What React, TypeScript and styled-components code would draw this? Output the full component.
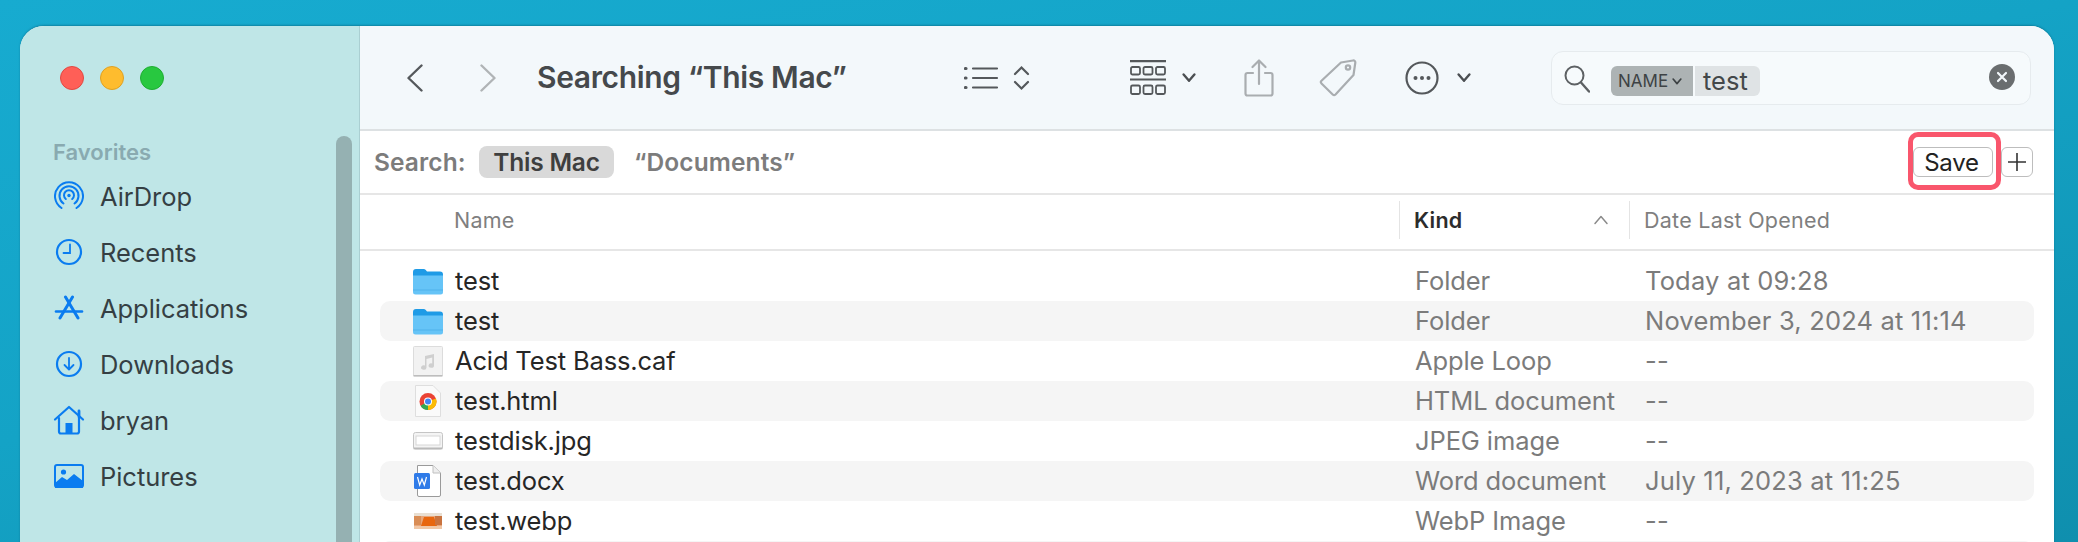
import React from "react";
import styled, { createGlobalStyle } from "styled-components";

const Global = createGlobalStyle`
  html, body { margin: 0; padding: 0; height: 542px; overflow: hidden; }
  body { font-family: Inter, "Noto Sans", "Liberation Sans", sans-serif; -webkit-font-smoothing: antialiased; }
  #root { height: 542px; }
`;

const Desktop = styled.div`
  box-sizing: border-box;
  height: 542px;
  padding: 26px 24px 0 20px;
  background: linear-gradient(168deg, #17abd0 0%, #14a3c6 45%, #0f8fae 100%);
  overflow: hidden;
`;
const Win = styled.div`
  display: flex;
  height: 560px;
  border-radius: 24px 24px 0 0;
  overflow: hidden;
  background: #fff;
  box-shadow: 0 -1px 2px rgba(0, 60, 80, 0.35);
`;
const Sidebar = styled.aside`
  position: relative;
  box-sizing: border-box;
  width: 340px;
  flex: none;
  padding: 40px 0 0 33px;
  background: #bfe6e7;
  border-right: 1px solid #aacfd2;
`;
const Lights = styled.div`
  display: flex;
  gap: 16px;
  padding-left: 7px;
  height: 24px;
`;
const Light = styled.span<{ $c: string; $b: string }>`
  box-sizing: border-box;
  width: 24px;
  height: 24px;
  border-radius: 50%;
  background: ${(p) => p.$c};
  border: 1px solid ${(p) => p.$b};
`;
const SectionTitle = styled.div`
  margin-top: 47px;
  height: 30px;
  line-height: 30px;
  font-size: 22px;
  font-weight: 600;
  color: #89aab0;
`;
const NavList = styled.nav`
  display: flex;
  flex-direction: column;
  margin-top: 1px;
`;
const NavItem = styled.div`
  display: flex;
  align-items: center;
  height: 56px;
  font-size: 25.5px;
  letter-spacing: -0.05px;
  color: #353f43;
`;
const NavIcon = styled.span`
  display: flex;
  justify-content: center;
  align-items: center;
  width: 32px;
  margin-right: 15px;
  flex: none;
`;
const Scrollbar = styled.div`
  position: absolute;
  left: 316px;
  top: 110px;
  bottom: 0;
  width: 16px;
  border-radius: 8px 8px 0 0;
  background: #95b1b2;
`;
const Main = styled.main`
  flex: 1;
  min-width: 0;
  display: flex;
  flex-direction: column;
`;
const Toolbar = styled.header`
  box-sizing: border-box;
  display: flex;
  align-items: center;
  height: 105px;
  padding-left: 47px;
  background: #f3f8fb;
  border-bottom: 2px solid #dde1e3;
`;
const ToolSlot = styled.div<{ $w: number }>`
  display: flex;
  align-items: center;
  flex: none;
  width: ${(p) => p.$w}px;
`;
const ToolGap = styled.span<{ $w: number }>`
  flex: none;
  width: ${(p) => p.$w}px;
`;
const Title = styled.h1`
  flex: none;
  width: 427px;
  margin: 0 0 2px;
  font-size: 30px;
  font-weight: 600;
  letter-spacing: -0.35px;
  color: #45494c;
  white-space: nowrap;
`;
const SearchField = styled.div`
  box-sizing: border-box;
  flex: none;
  display: flex;
  align-items: center;
  width: 480px;
  height: 54px;
  margin-top: 1px;
  padding-left: 12px;
  border: 1px solid #e6ebee;
  border-radius: 12px;
  background: #f6fafc;
`;
const SearchGlyph = styled.span`
  display: flex;
  margin-top: 2px;
`;
const TokenName = styled.span`
  display: flex;
  align-items: center;
  gap: 4px;
  box-sizing: border-box;
  width: 82px;
  height: 30px;
  margin: 6px 0 0 21px;
  padding-left: 7px;
  border-radius: 6px 0 0 6px;
  background: #adb3b4;
  color: #3d4244;
  font-size: 17px;
`;
const TokenValue = styled.span`
  box-sizing: border-box;
  width: 65px;
  height: 30px;
  margin: 6px 0 0 2px;
  padding-left: 8px;
  line-height: 30px;
  border-radius: 0 6px 6px 0;
  background: #dfe3e5;
  color: #43484a;
  font-size: 25.5px;
`;
const ClearBtn = styled.span`
  display: flex;
  margin: 0 15px 2px auto;
`;
const ScopeBar = styled.div`
  position: relative;
  box-sizing: border-box;
  display: flex;
  align-items: center;
  height: 64px;
  padding-left: 14px;
  border-bottom: 2px solid #e6e6e6;
  font-size: 24.5px;
  font-weight: 600;
  color: #7c7c7c;
`;
const ScopeLabel = styled.span`
  width: 105px;
  letter-spacing: 0.1px;
`;
const ScopePill = styled.span<{ $active?: boolean }>`
  box-sizing: border-box;
  height: 32px;
  line-height: 32px;
  width: ${(p) => (p.$active ? "135px" : "auto")};
  margin-left: ${(p) => (p.$active ? "0" : "20px")};
  text-align: center;
  border-radius: 8px;
  letter-spacing: ${(p) => (p.$active ? "-0.2px" : "0.1px")};
  background: ${(p) => (p.$active ? "#d9d9d9" : "transparent")};
  color: ${(p) => (p.$active ? "#3f3f3f" : "#7c7c7c")};
`;
const ScopeActions = styled.div`
  display: flex;
  margin-left: auto;
  margin-right: 21px;
`;
const SaveButton = styled.button`
  position: relative;
  box-sizing: border-box;
  width: 80px;
  height: 30px;
  padding: 0 3px 0 0;
  border: 1px solid #bdbdbd;
  border-radius: 6px;
  background: #fff;
  color: #222;
  font: 400 24px Inter, sans-serif;
  letter-spacing: -0.2px;
  &::after {
    content: "";
    position: absolute;
    left: -6px;
    right: -9px;
    top: -16px;
    bottom: -14px;
    border: 5px solid #f9566c;
    border-radius: 10px;
  }
`;
const PlusButton = styled.span`
  box-sizing: border-box;
  display: flex;
  align-items: center;
  justify-content: center;
  width: 32px;
  height: 30px;
  margin-left: 8px;
  border: 1px solid #bdbdbd;
  border-radius: 6px;
`;
const ColumnHeader = styled.div`
  box-sizing: border-box;
  display: grid;
  grid-template-columns: 1039px 230px 1fr;
  align-items: center;
  height: 56px;
  padding-bottom: 4px;
  border-bottom: 2px solid #e6e6e6;
  font-size: 21.5px;
  color: #7f7f7f;
`;
const HeadCell = styled.div<{ $pad: number; $sep?: boolean; $strong?: boolean }>`
  box-sizing: border-box;
  display: flex;
  align-items: center;
  justify-content: space-between;
  height: 38px;
  padding-left: ${(p) => p.$pad}px;
  padding-right: 20px;
  border-left: ${(p) => (p.$sep ? "1px solid #e4e4e4" : "none")};
  font-weight: ${(p) => (p.$strong ? 600 : 400)};
  color: ${(p) => (p.$strong ? "#2c2c2c" : "#7f7f7f")};
  letter-spacing: 0.25px;
`;
const FileList = styled.div`
  display: flex;
  flex-direction: column;
  padding: 10px 20px 0;
`;
const Row = styled.div<{ $striped: boolean }>`
  display: grid;
  grid-template-columns: 1035px 230px 1fr;
  align-items: center;
  flex: none;
  height: 40px;
  border-radius: 10px;
  background: ${(p) => (p.$striped ? "#f5f5f5" : "transparent")};
  font-size: 25.5px;
  line-height: 38px;
`;
const NameCell = styled.div`
  display: flex;
  align-items: center;
  margin-left: -1px;
  letter-spacing: -0.15px;
  color: #262626;
`;
const FileIcon = styled.span`
  display: flex;
  justify-content: center;
  align-items: center;
  width: 30px;
  margin-left: 34px;
  margin-right: 12px;
  flex: none;
`;
const MutedCell = styled.div<{ $wide?: boolean }>`
  min-height: 38px;
  letter-spacing: ${(p) => (p.$wide ? "0.18px" : "-0.1px")};
  color: #7b7b7b;
  white-space: nowrap;
`;

const BLUE = "#0a7cf0";
const Glyph = styled.svg`
  display: block;
  flex: none;
`;

const IconAirDrop = () => (
  <Glyph width="30" height="30" viewBox="0 0 30 30" fill="none" stroke={BLUE} strokeWidth="2" strokeLinecap="round">
    <path d="M7.5 27A14 14 0 1 1 22.5 27" />
    <path d="M9.5 22.5A9.5 9.5 0 1 1 20.5 22.5" />
    <path d="M11.8 18A5 5 0 1 1 18.2 18" />
    <circle cx="15" cy="14.5" r="1.7" fill={BLUE} stroke="none" />
  </Glyph>
);
const IconRecents = () => (
  <Glyph width="28" height="28" viewBox="0 0 28 28" fill="none" stroke={BLUE} strokeWidth="2.2" strokeLinecap="round">
    <circle cx="14" cy="14" r="12" />
    <path d="M15 6.5V15H8.5" strokeWidth="1.8" />
  </Glyph>
);
const IconApps = () => (
  <Glyph width="30" height="26" viewBox="0 0 30 26" fill="none" stroke={BLUE} strokeWidth="3" strokeLinecap="round">
    <path d="M11.500 2L24 23" />
    <path d="M18.500 2L6 23" />
    <path d="M2 16.500H28" strokeWidth="2.600" />
  </Glyph>
);
const IconDownloads = () => (
  <Glyph width="28" height="28" viewBox="0 0 28 28" fill="none" stroke={BLUE} strokeWidth="2.2" strokeLinecap="round" strokeLinejoin="round">
    <circle cx="14" cy="14" r="12" />
    <path d="M14 8V19M9.5 15L14 19.5 18.5 15" strokeWidth="1.8" />
  </Glyph>
);
const IconHome = () => (
  <Glyph width="32" height="30" viewBox="0 0 32 30" fill="none" stroke={BLUE} strokeWidth="2.2" strokeLinecap="round" strokeLinejoin="round">
    <path d="M2 14.5L16 2l14 12.5" />
    <path d="M26 6v6" strokeWidth="2.8" />
    <path d="M6 13v13.5a2 2 0 0 0 2 2h16a2 2 0 0 0 2-2V13" />
    <rect x="12.5" y="18" width="7" height="10" fill={BLUE} stroke="none" />
  </Glyph>
);
const IconPictures = () => (
  <Glyph width="30" height="24" viewBox="0 0 30 24" fill="none">
    <rect x="1" y="1" width="28" height="22" rx="2" stroke={BLUE} strokeWidth="2" />
    <circle cx="9.5" cy="8" r="2.6" fill={BLUE} />
    <path d="M1 19l7-6 5 3 7-6 9 7v6a2 2 0 0 1-2 2H3a2 2 0 0 1-2-2z" fill={BLUE} />
  </Glyph>
);

const Chevron = ({ dir, color, w = 16, h = 28 }: { dir: "left" | "right"; color: string; w?: number; h?: number }) => (
  <Glyph width={w} height={h} viewBox="0 0 16 28" fill="none" stroke={color} strokeWidth="2.4" strokeLinecap="round" strokeLinejoin="round">
    <path d={dir === "left" ? "M14.5 1.5L1.5 14l13 12.5" : "M1.5 1.5L14.5 14l-13 12.5"} />
  </Glyph>
);
const SmallDown = ({ color = "#4b4f52", w = 14 }: { color?: string; w?: number }) => (
  <Glyph width={w} height={w * 0.7} viewBox="0 0 14 10" fill="none" stroke={color} strokeWidth="2.4" strokeLinecap="round" strokeLinejoin="round">
    <path d="M1.5 1.5L7 8l5.500-6.500" />
  </Glyph>
);
const IconListView = () => (
  <Glyph width="66" height="26" viewBox="0 0 66 26" fill="none" stroke="#54585b" strokeWidth="2.2" strokeLinecap="round">
    <path d="M9 3.500H33M9 13H33M9 22.500H33" />
    <path d="M1.500 3.500h.5M1.500 13h.5M1.500 22.500h.5" strokeWidth="3.200" />
    <path d="M51 9L57.500 2.500 64 9M51 17L57.500 23.500 64 17" />
  </Glyph>
);
const IconGroup = () => (
  <Glyph width="36" height="36" viewBox="0 0 36 36" fill="none" stroke="#54585b" strokeWidth="1.800">
    <path d="M0 1.200H36M0 19.500H36" strokeWidth="2.200" />
    <rect x="1" y="7" width="9" height="7.500" rx="1.500" />
    <rect x="13.500" y="7" width="9" height="7.500" rx="1.500" />
    <rect x="26" y="7" width="9" height="7.500" rx="1.500" />
    <rect x="1" y="25.500" width="9" height="8.500" rx="1.500" />
    <rect x="13.500" y="25.500" width="9" height="8.500" rx="1.500" />
    <rect x="26" y="25.500" width="9" height="8.500" rx="1.500" />
  </Glyph>
);
const IconShare = () => (
  <Glyph width="30" height="38" viewBox="0 0 30 38" fill="none" stroke="#a9adb0" strokeWidth="2.200" strokeLinecap="round" strokeLinejoin="round">
    <path d="M9 14H3.500a2 2 0 0 0-2 2v18.500a2 2 0 0 0 2 2h23a2 2 0 0 0 2-2V16a2 2 0 0 0-2-2H21" />
    <path d="M15 25V2M8.500 8L15 1.500 21.500 8" />
  </Glyph>
);
const IconTag = () => (
  <Glyph width="38" height="38" viewBox="0 0 38 38" fill="none" stroke="#a9adb0" strokeWidth="2.200" strokeLinejoin="round">
    <path d="M22 3.500L34 1.500a2 2 0 0 1 2.300 2.300L34.500 16 16.500 35.500a2 2 0 0 1-2.800 0L2.500 24.500a2 2 0 0 1 0-2.800z" />
    <circle cx="29" cy="8.500" r="2.200" />
  </Glyph>
);
const IconMore = () => (
  <Glyph width="34" height="34" viewBox="0 0 34 34" fill="none" stroke="#54585b" strokeWidth="2.200">
    <circle cx="17" cy="17" r="15.500" />
    <g fill="#54585b" stroke="none">
      <circle cx="10.500" cy="17" r="2" />
      <circle cx="17" cy="17" r="2" />
      <circle cx="23.500" cy="17" r="2" />
    </g>
  </Glyph>
);
const IconSearch = () => (
  <Glyph width="26" height="28" viewBox="0 0 26 28" fill="none" stroke="#5d6164" strokeWidth="2" strokeLinecap="round">
    <circle cx="10.500" cy="10.500" r="9" />
    <path d="M17 17.500L25 26.500" strokeWidth="2.400" />
  </Glyph>
);
const IconClear = () => (
  <Glyph width="26" height="26" viewBox="0 0 26 26">
    <circle cx="13" cy="13" r="13" fill="#6a6d6f" />
    <path d="M9 9l8 8M17 9l-8 8" stroke="#f3f8fb" strokeWidth="2.200" strokeLinecap="round" />
  </Glyph>
);
const IconPlus = () => (
  <Glyph width="18" height="18" viewBox="0 0 18 18" stroke="#333" strokeWidth="1.600">
    <path d="M9 0V18M0 9H18" />
  </Glyph>
);
const IconUp = () => (
  <Glyph width="16" height="10" viewBox="0 0 16 10" fill="none" stroke="#8a8a8a" strokeWidth="1.500" strokeLinecap="round" strokeLinejoin="round">
    <path d="M2 8.500L8 1.500l6 7" />
  </Glyph>
);

const IconFolder = () => (
  <Glyph width="30" height="28" viewBox="0 0 30 28">
    <path d="M0 5a3 3 0 0 1 3-3h7.500a3 3 0 0 1 2.300 1l1.200 1.500h13a3 3 0 0 1 3 3V12H0z" fill="#1f9be6" />
    <path d="M0 8.500h30V25a2.500 2.500 0 0 1-2.500 2.500h-25A2.500 2.500 0 0 1 0 25z" fill="#66c4f7" />
    <rect x="0" y="22.500" width="30" height="1" fill="#4fb2eb" />
  </Glyph>
);
const IconAudio = () => (
  <Glyph width="30" height="31" viewBox="0 0 30 31">
    <rect x="0.500" y="0.500" width="29" height="29.500" rx="1" fill="#f2f2f2" stroke="#dcdcdc" />
    <rect x="0.500" y="29" width="29" height="1.500" fill="#bdbdbd" />
    <path d="M12 10l9-2v11.500a2.700 2.200 0 1 1-1.800-2V11.500L13.500 13v8.500a2.700 2.200 0 1 1-1.500-2z" fill="#cfcfcf" />
  </Glyph>
);
const IconChrome = () => (
  <Glyph width="26" height="32" viewBox="0 0 26 32">
    <path d="M.5.500H18L25.500 8v23.500H.500z" fill="#fafafa" stroke="#dedede" />
    <circle cx="13" cy="16.500" r="8.500" fill="#ea4335" />
    <path d="M13 16.500L13 25A8.500 8.500 0 0 0 21 13.500z" fill="#fbbc05" />
    <path d="M13 16.500L5.600 20.700A8.500 8.500 0 0 0 13 25z" fill="#34a853" />
    <circle cx="13" cy="16.500" r="4" fill="#fff" />
    <circle cx="13" cy="16.500" r="3" fill="#4285f4" />
  </Glyph>
);
const IconKeyboard = () => (
  <Glyph width="30" height="18" viewBox="0 0 30 18">
    <rect x="0.500" y="0.500" width="29" height="16.500" rx="2" fill="#f4f4f4" stroke="#c5c5c5" />
    <rect x="3" y="4" width="24" height="9" fill="#fff" stroke="#d6d6d6" />
    <rect x="0.500" y="15.500" width="29" height="1.800" fill="#b9b9b9" />
  </Glyph>
);
const IconWord = () => (
  <Glyph width="28" height="32" viewBox="0 0 28 32">
    <path d="M3.500.500H19L26.500 8v22a1.500 1.500 0 0 1-1.500 1.500H5A1.500 1.500 0 0 1 3.500 30z" fill="#fff" stroke="#9a9a9a" />
    <path d="M19 .5V8h7.500" fill="#eee" stroke="#c0c0c0" />
    <rect x="0" y="8" width="16" height="16" rx="1.500" fill="#2f7be8" />
    <path d="M3.500 12l2.200 8L8 14l2.300 6 2.200-8" fill="none" stroke="#fff" strokeWidth="1.200" />
  </Glyph>
);
const IconPhoto = () => (
  <Glyph width="28" height="16" viewBox="0 0 28 16">
    <rect width="28" height="16" fill="#e8a67a" />
    <rect y="0" width="28" height="3" fill="#e9dfd2" />
    <rect x="0" y="3" width="7" height="9" fill="#d98d56" />
    <path d="M7 13l3-9h10l3 9z" fill="#e8670f" />
    <rect x="21" y="3" width="7" height="9" fill="#c9733f" />
    <rect y="13" width="28" height="3" fill="#f0c7a6" />
  </Glyph>
);

const navItems = [
  { label: "AirDrop", icon: <IconAirDrop /> },
  { label: "Recents", icon: <IconRecents /> },
  { label: "Applications", icon: <IconApps /> },
  { label: "Downloads", icon: <IconDownloads /> },
  { label: "bryan", icon: <IconHome /> },
  { label: "Pictures", icon: <IconPictures /> },
];

const files = [
  { name: "test", kind: "Folder", date: "Today at 09:28", icon: <IconFolder /> },
  { name: "test", kind: "Folder", date: "November 3, 2024 at 11:14", icon: <IconFolder /> },
  { name: "Acid Test Bass.caf", kind: "Apple Loop", date: "--", icon: <IconAudio /> },
  { name: "test.html", kind: "HTML document", date: "--", icon: <IconChrome /> },
  { name: "testdisk.jpg", kind: "JPEG image", date: "--", icon: <IconKeyboard /> },
  { name: "test.docx", kind: "Word document", date: "July 11, 2023 at 11:25", icon: <IconWord /> },
  { name: "test.webp", kind: "WebP Image", date: "--", icon: <IconPhoto /> },
  { name: "", kind: "", date: "", icon: null },
];

export default function App() {
  return (
    <>
      <Global />
      <Desktop>
        <Win>
          <Sidebar>
            <Lights>
              <Light $c="#ff5f57" $b="#e14942" />
              <Light $c="#febc2e" $b="#dfa123" />
              <Light $c="#28c840" $b="#1fae32" />
            </Lights>
            <SectionTitle>Favorites</SectionTitle>
            <NavList>
              {navItems.map((n) => (
                <NavItem key={n.label}>
                  <NavIcon>{n.icon}</NavIcon>
                  {n.label}
                </NavItem>
              ))}
            </NavList>
            <Scrollbar />
          </Sidebar>
          <Main>
            <Toolbar>
              <ToolSlot $w={73}>
                <Chevron dir="left" color="#55595c" />
              </ToolSlot>
              <ToolSlot $w={57}>
                <Chevron dir="right" color="#b0b4b6" />
              </ToolSlot>
              <Title>Searching “This Mac”</Title>
              <ToolSlot $w={166}>
                <IconListView />
              </ToolSlot>
              <ToolSlot $w={114}>
                <IconGroup />
                <ToolGap $w={16} />
                <SmallDown />
              </ToolSlot>
              <ToolSlot $w={75}>
                <IconShare />
              </ToolSlot>
              <ToolSlot $w={86}>
                <IconTag />
              </ToolSlot>
              <ToolSlot $w={146}>
                <IconMore />
                <ToolGap $w={18} />
                <SmallDown />
              </ToolSlot>
              <SearchField>
                <SearchGlyph>
                  <IconSearch />
                </SearchGlyph>
                <TokenName>
                  NAME
                  <SmallDown color="#3d4244" w={10} />
                </TokenName>
                <TokenValue>test</TokenValue>
                <ClearBtn>
                  <IconClear />
                </ClearBtn>
              </SearchField>
            </Toolbar>
            <ScopeBar>
              <ScopeLabel>Search:</ScopeLabel>
              <ScopePill $active>This Mac</ScopePill>
              <ScopePill>“Documents”</ScopePill>
              <ScopeActions>
                <SaveButton>Save</SaveButton>
                <PlusButton>
                  <IconPlus />
                </PlusButton>
              </ScopeActions>
            </ScopeBar>
            <ColumnHeader>
              <HeadCell $pad={94}>Name</HeadCell>
              <HeadCell $pad={14} $sep $strong>
                Kind
                <IconUp />
              </HeadCell>
              <HeadCell $pad={14} $sep>
                Date Last Opened
              </HeadCell>
            </ColumnHeader>
            <FileList>
              {files.map((f, i) => (
                <Row key={i} $striped={i % 2 === 1}>
                  <NameCell>
                    <FileIcon>{f.icon}</FileIcon>
                    {f.name}
                  </NameCell>
                  <MutedCell>{f.kind}</MutedCell>
                  <MutedCell $wide>{f.date}</MutedCell>
                </Row>
              ))}
            </FileList>
          </Main>
        </Win>
      </Desktop>
    </>
  );
}
